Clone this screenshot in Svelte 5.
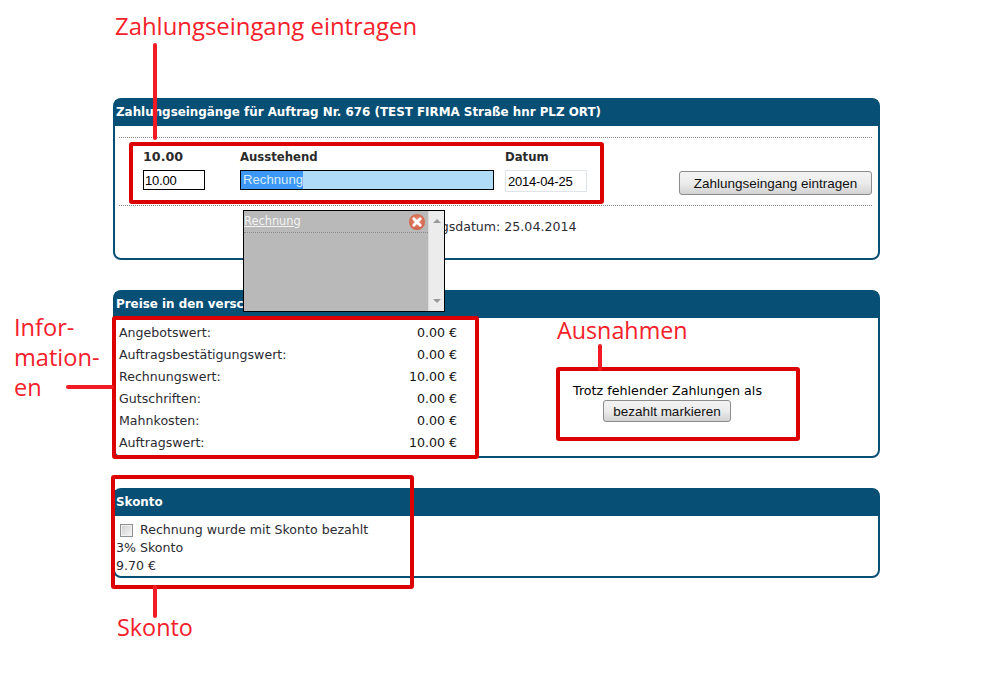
<script>
  const prices = [
    ['Angebotswert:', '0.00 €'],
    ['Auftragsbestätigungswert:', '0.00 €'],
    ['Rechnungswert:', '10.00 €'],
    ['Gutschriften:', '0.00 €'],
    ['Mahnkosten:', '0.00 €'],
    ['Auftragswert:', '10.00 €']
  ];
</script>

<div class="page">
  <section class="panel first">
    <h2>Zahlungseingänge für Auftrag Nr. 676 (TEST FIRMA Straße hnr PLZ ORT)</h2>
    <div class="entry">
      <div class="fields">
        <div class="field amount">
          <strong>10.00</strong>
          <input class="dark" value="10.00" />
        </div>
        <div class="field pending">
          <strong>Ausstehend</strong>
          <div class="select-box"><span>Rechnung</span></div>
        </div>
        <div class="field date">
          <strong>Datum</strong>
          <input class="light" value="2014-04-25" />
        </div>
      </div>
      <button class="submit">Zahlungseingang eintragen</button>
    </div>
    <p class="order-date">Auftragsdatum: 25.04.2014</p>
  </section>

  <section class="panel second">
    <h2>Preise in den verschiedenen Stadien</h2>
    <div class="price-body">
      <div class="prices">
        {#each prices as [label, value]}
          <div class="price"><span>{label}</span><span class="val">{value}</span></div>
        {/each}
      </div>
      <div class="exception">
        <div>Trotz fehlender Zahlungen als</div>
        <button class="mark">bezahlt markieren</button>
      </div>
    </div>
  </section>

  <section class="panel third">
    <h2>Skonto</h2>
    <div class="skonto">
      <label><input type="checkbox" /><span>Rechnung wurde mit Skonto bezahlt</span></label>
      <div>3% Skonto</div>
      <div>9.70 €</div>
    </div>
  </section>

  <div class="popup">
    <div class="popup-main">
      <div class="popup-row">
        <a href="#r">Rechnung</a>
        <svg class="close" width="18" height="18" viewBox="0 0 18 18" aria-hidden="true">
          <defs>
            <radialGradient id="closeFill" cx="50%" cy="40%" r="60%">
              <stop offset="0%" stop-color="#e88a70" />
              <stop offset="100%" stop-color="#cf5f48" />
            </radialGradient>
          </defs>
          <circle cx="9" cy="9" r="8" fill="url(#closeFill)" />
          <path d="M5.8 5.8l6.4 6.4M12.2 5.8l-6.4 6.4" stroke="#fff" stroke-width="3" stroke-linecap="round" />
        </svg>
      </div>
    </div>
    <div class="scroll">
      <svg width="10" height="6" viewBox="0 0 10 6" aria-hidden="true"><path d="M1 5h8L5 1z" fill="#9a9a9a" /></svg>
      <svg width="10" height="6" viewBox="0 0 10 6" aria-hidden="true"><path d="M1 1h8L5 5z" fill="#9a9a9a" /></svg>
    </div>
  </div>

  <div class="box b1"></div>
  <div class="box b2"></div>
  <div class="box b3"></div>
  <div class="box b4"></div>
  <div class="line l1"></div>
  <div class="line l2"></div>
  <div class="line l3"></div>
  <div class="line l4"></div>
  <div class="note n1">Zahlungseingang eintragen</div>
  <div class="note n2">Infor-<br />mation-<br />en</div>
  <div class="note n3">Ausnahmen</div>
  <div class="note n4">Skonto</div>
</div>

<style>
  :global(body) { margin: 0; background: #fff; }
  .page {
    position: relative;
    width: 1000px;
    height: 681px;
    box-sizing: border-box;
    padding: 98px 0 0 113px;
    display: flex;
    flex-direction: column;
    gap: 30px;
    overflow: hidden;
    font: 12.6px/18px "DejaVu Sans", Verdana, sans-serif;
    color: #2b2b33;
  }
  .panel {
    width: 767px;
    box-sizing: border-box;
    border: 2px solid #084f76;
    border-radius: 8px;
    background: #fff;
  }
  .first { height: 162px; padding: 0 6px 0 4px; }
  .second { height: 168px; }
  .third { height: 90px; }
  h2 {
    margin: 0;
    height: 26px;
    padding: 2px 0 0 1px;
    box-sizing: border-box;
    background: #084f76;
    color: #fff;
    font-size: 11.9px;
    line-height: 20px;
    font-weight: bold;
  }
  .first h2 { margin: 0 -6px 0 -4px; }
  .entry {
    margin-top: 11px;
    height: 69px;
    border-top: 1px dotted #8a8a8a;
    border-bottom: 1px dotted #8a8a8a;
    box-sizing: border-box;
    display: flex;
    justify-content: space-between;
    align-items: flex-start;
  }
  .fields { display: flex; padding: 10px 0 0 24px; }
  .field { display: flex; flex-direction: column; }
  .field strong { height: 22px; line-height: 18px; color: #2b2b2b; font-size: 11.7px; }
  .amount strong { font-size: 12.7px; }
  .amount { width: 97px; }
  .pending { width: 265px; }
  input:not([type]) {
    box-sizing: border-box;
    padding: 0 1px;
    font: 13px "Liberation Sans", Arial, sans-serif;
    letter-spacing: -0.2px;
    color: #000;
    outline: none;
  }
  .dark { width: 62px; height: 20px; border: 1px solid #000; background: #fff; }
  .light { width: 82px; height: 22px; border: 1px solid #dfe3ea; background: #fff; padding: 0 2px !important; }
  .select-box {
    width: 254px;
    height: 20px;
    box-sizing: border-box;
    border: 1px solid #000;
    background: #aedcf9;
    font: 13.2px/18px "Liberation Sans", Arial, sans-serif;
  }
  .select-box span { display: inline-block; padding-left: 2px; background: #3d98f5; color: #d9ecfb; height: 18px; }
  button {
    box-sizing: border-box;
    border: 1px solid #8c8c8c;
    border-radius: 3px;
    background: linear-gradient(#f3f3f3 0%, #ececec 50%, #d2d2d2 100%);
    color: #111;
    padding: 0;
    font: 13.5px "Liberation Sans", Arial, sans-serif;
  }
  .submit { width: 193px; height: 24px; margin-top: 33px; }
  .order-date { margin: 12px 0 0 283px; }
  .price-body { display: flex; }
  .prices { width: 338px; padding: 4px 0 0 4px; }
  .price { display: flex; justify-content: space-between; height: 22px; line-height: 22px; }
  .val { color: #111; }
  .exception {
    margin: 64px 0 0 116px;
    color: #000;
    font-size: 12.7px;
    line-height: 17px;
  }
  .exception > div { white-space: nowrap; }
  .mark { display: block; width: 128px; height: 22px; margin: 1px 0 0 30px; }
  .skonto { padding: 5px 0 0 1px; }
  label { display: flex; align-items: center; height: 18px; }
  label input {
    appearance: none;
    box-sizing: border-box;
    width: 13px;
    height: 13px;
    margin: 0 7px 0 4px;
    flex: none;
    border: 1px solid #8e8f8f;
    box-shadow: inset 0 0 0 1px #f2f2f2;
    background: linear-gradient(135deg, #cfcfcf, #f6f6f6);
  }
  .popup {
    position: absolute;
    left: 243px;
    top: 210px;
    width: 202px;
    height: 102px;
    box-sizing: border-box;
    border: 1px solid #000;
    display: flex;
    background: #b9b9b9;
  }
  .popup-main { flex: 1; }
  .popup-row {
    height: 21px;
    border-bottom: 1px dotted #8a8a8a;
    display: flex;
    align-items: center;
    justify-content: space-between;
    padding-right: 2px;
  }
  .popup-row a { color: #f4f4f4; font-size: 11.4px; margin-bottom: 2px; }
  .close { display: block; }
  .scroll {
    width: 16px;
    background: #ececec;
    border-left: 1px solid #dcdcdc;
    display: flex;
    flex-direction: column;
    justify-content: space-between;
    align-items: center;
    padding: 7px 0;
    box-sizing: border-box;
  }
  .scroll svg { display: block; }
  .box {
    position: absolute;
    box-sizing: border-box;
    border: 4px solid #dc0000;
    border-radius: 3px;
  }
  .b1 { left: 129px; top: 142px; width: 475px; height: 62px; }
  .b2 { left: 112px; top: 316px; width: 367px; height: 143px; }
  .b3 { left: 556px; top: 367px; width: 244px; height: 74px; }
  .b4 { left: 111px; top: 475px; width: 303px; height: 114px; }
  .line { position: absolute; background: #f21a24; border-radius: 2px; }
  .l1 { left: 153px; top: 43px; width: 4px; height: 97px; }
  .l2 { left: 66px; top: 385px; width: 48px; height: 4px; }
  .l3 { left: 598px; top: 344px; width: 4px; height: 27px; }
  .l4 { left: 153px; top: 585px; width: 4px; height: 33px; }
  .note {
    position: absolute;
    color: #f5202a;
    font-family: "Open Sans", "Noto Sans", sans-serif;
    font-size: 23.9px;
    line-height: 30px;
    white-space: nowrap;
  }
  .n1 { left: 115px; top: 11px; }
  .n2 { left: 14px; top: 312px; font-size: 23.6px; }
  .n3 { left: 557px; top: 315px; font-size: 23.3px; }
  .n4 { left: 117px; top: 612px; font-size: 23.4px; }
</style>
